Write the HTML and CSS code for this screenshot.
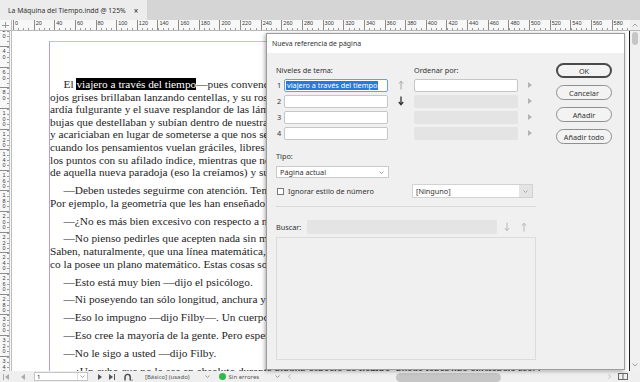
FILE: index.html
```html
<!DOCTYPE html>
<html lang="es">
<head>
  <meta charset="UTF-8">
  <title>La Máquina del Tiempo.indd @ 125%</title>
  <link rel="stylesheet" href="styles.css">
</head>
<body>
  <div id="app">
    <div class="tabbar">
      <div class="tab">La Máquina del Tiempo.indd @ 125% <span class="tab-close">×</span></div>
    </div>

    <div class="ruler-row">
      <div class="ruler-corner"></div>
      <div class="hruler">
        <span>0</span><span>20</span><span>40</span><span>60</span><span>80</span><span>100</span><span>120</span><span>140</span><span>160</span><span>180</span><span>200</span><span>220</span><span>240</span><span>260</span><span>280</span><span>300</span><span>320</span><span>340</span><span>360</span><span>380</span><span>400</span><span>420</span><span>440</span><span>460</span><span>480</span><span>500</span><span>520</span><span>540</span><span>560</span><span>580</span>
      </div>
      <div class="vscroll-cap">
        <svg width="6" height="4" viewBox="0 0 6 4"><path d="M0.5 3.5 L3 1 L5.5 3.5" fill="none" stroke="#999" stroke-width="0.9"/></svg>
      </div>
    </div>

    <div class="work">
      <div class="vruler">
        <div class="vruler-inner">
          <div class="vcell"><span>20</span></div><div class="vcell"><span>40</span></div><div class="vcell"><span>60</span></div><div class="vcell"><span>80</span></div><div class="vcell"><span>100</span></div><div class="vcell"><span>120</span></div><div class="vcell"><span>140</span></div><div class="vcell"><span>160</span></div><div class="vcell"><span>180</span></div><div class="vcell"><span>200</span></div><div class="vcell"><span>220</span></div><div class="vcell"><span>240</span></div><div class="vcell"><span>260</span></div><div class="vcell"><span>280</span></div><div class="vcell"><span>300</span></div><div class="vcell"><span>320</span></div><div class="vcell"><span>340</span></div>
        </div>
      </div>

      <div class="canvas">
        <div class="frame">
          <div class="story">
            <p>
              <span class="ln ind">El <mark>viajero a través del tiempo</mark>—pues convendrá llamarle así al hablar de él— nos exponía una misteriosa cuestión. Sus</span>
              <span class="ln">ojos grises brillaban lanzando centellas, y su rostro, habitualmente pálido, estaba encendido y animado. El fuego</span>
              <span class="ln">ardía fulgurante y el suave resplandor de las lámparas incandescentes, en forma de lirios de plata, se prendía en las bur-</span>
              <span class="ln">bujas que destellaban y subían dentro de nuestras copas. Nuestros sillones, construidos según sus diseños, nos abrazaban</span>
              <span class="ln">y acariciaban en lugar de someterse a que nos sentásemos en ellos; y había allí esa sibarítica atmósfera de sobremesa,</span>
              <span class="ln">cuando los pensamientos vuelan gráciles, libres de las trabas de la exactitud. Y él nos la expuso de este modo, señalando</span>
              <span class="ln">los puntos con su afilado índice, mientras que nosotros, arrellanados perezosamente, admirábamos su seriedad al tratar</span>
              <span class="ln">de aquella nueva paradoja (eso la creíamos) y su fecundidad.</span>
            </p>
            <p>
              <span class="ln ind">—Deben ustedes seguirme con atención. Tendré que discutir una o dos ideas que están casi universalmente admitidas.</span>
              <span class="ln">Por ejemplo, la geometría que les han enseñado en el colegio está basada sobre un concepto erróneo.</span>
            </p>
            <p><span class="ln ind">—¿No es más bien excesivo con respecto a nosotros ese comienzo? —dijo Filby, un personaje polemista de pelo rojo.</span></p>
            <p>
              <span class="ln ind">—No pienso pedirles que acepten nada sin motivo razonable para ello. Pronto admitirán lo que necesito de ustedes.</span>
              <span class="ln">Saben, naturalmente, que una línea matemática, una línea de espesor nulo, no tiene existencia real. ¿Les han enseñado esto? Tampo-</span>
              <span class="ln">co la posee un plano matemático. Estas cosas son simples abstracciones.</span>
            </p>
            <p><span class="ln ind">—Esto está muy bien —dijo el psicólogo.</span></p>
            <p><span class="ln ind">—Ni poseyendo tan sólo longitud, anchura y espesor, ¿puede un cubo tener existencia real?</span></p>
            <p><span class="ln ind">—Eso lo impugno —dijo Filby—. Un cuerpo sólido puede, por supuesto, existir. Todas las cosas reales...</span></p>
            <p><span class="ln ind">—Eso cree la mayoría de la gente. Pero espere un momento. ¿Puede un cubo instantáneo existir?</span></p>
            <p><span class="ln ind">—No le sigo a usted —dijo Filby.</span></p>
            <p><span class="ln ind">—¿Un cubo que no lo sea en absoluto durante ningún espacio de tiempo, puede tener una existencia real?</span></p>
          </div>
        </div>
      </div>

      <div class="vscroll">
        <div class="vthumb"></div>
        <svg class="vdown" width="6" height="4" viewBox="0 0 6 4"><path d="M0.5 0.5 L3 3 L5.5 0.5" fill="none" stroke="#999" stroke-width="0.9"/></svg>
      </div>
    </div>

    <div class="statusbar">
      <svg class="sb-first" width="6" height="6" viewBox="0 0 6 6"><path d="M0.5 0 V6" stroke="#aaa"/><path d="M6 0 L2 3 L6 6Z" fill="#aaa"/></svg>
      <svg class="sb-prev" width="4" height="6" viewBox="0 0 4 6"><path d="M4 0 L0 3 L4 6Z" fill="#aaa"/></svg>
      <div class="sb-page">
        <span class="sb-page-num">1</span>
        <span class="sb-page-drop"><svg width="5" height="3" viewBox="0 0 5 3"><path d="M0.5 0.5 L2.5 2.5 L4.5 0.5" fill="none" stroke="#888" stroke-width="0.8"/></svg></span>
      </div>
      <svg class="sb-next" width="4" height="6" viewBox="0 0 4 6"><path d="M0 0 L4 3 L0 6Z" fill="#555"/></svg>
      <svg class="sb-last" width="6" height="6" viewBox="0 0 6 6"><path d="M0 0 L4 3 L0 6Z" fill="#555"/><path d="M5.5 0 V6" stroke="#555"/></svg>
      <svg class="sb-arch" width="9" height="8" viewBox="0 0 9 8"><path d="M1 7.5 V4 A2.6 2.6 0 0 1 6.2 4 V7.5" fill="none" stroke="#444" stroke-width="1.4"/><circle cx="8" cy="7.2" r="0.6" fill="#444"/></svg>
      <span class="sb-style">[Básico] (usado)</span>
      <svg class="sb-drop1" width="5" height="3" viewBox="0 0 5 3"><path d="M0.5 0.5 L2.5 2.5 L4.5 0.5" fill="none" stroke="#888" stroke-width="0.8"/></svg>
      <span class="sb-dot"></span>
      <span class="sb-errors">Sin errores</span>
      <svg class="sb-drop2" width="5" height="3" viewBox="0 0 5 3"><path d="M0.5 0.5 L2.5 2.5 L4.5 0.5" fill="none" stroke="#888" stroke-width="0.8"/></svg>
      <svg class="sb-left" width="3" height="5" viewBox="0 0 3 5"><path d="M2.5 0.5 L0.5 2.5 L2.5 4.5" fill="none" stroke="#aaa" stroke-width="0.8"/></svg>
      <div class="hthumb"></div>
      <svg class="sb-right" width="3" height="5" viewBox="0 0 3 5"><path d="M0.5 0.5 L2.5 2.5 L0.5 4.5" fill="none" stroke="#aaa" stroke-width="0.8"/></svg>
      <svg class="sb-split" width="10" height="7" viewBox="0 0 10 7"><rect x="0.5" y="0.5" width="9" height="6" fill="none" stroke="#666"/><path d="M5 0.5 V6.5" stroke="#666"/></svg>
    </div>

    <!-- dialog floats over the document -->
    <div class="dialog">
      <div class="dlg-title">Nueva referencia de página</div>
      <div class="dlg-body">
        <div class="dlg-main">
          <div class="levels">
            <div class="lbl lbl-levels">Niveles de tema:</div>
            <div class="lbl lbl-sort">Ordenar por:</div>

            <span class="num">1</span>
            <div class="field focus"><span class="sel">viajero a través del tiempo</span></div>
            <svg class="arrow" width="6" height="10" viewBox="0 0 6 10"><path d="M3 1.2 V9.5 M1 3.6 L3 1.2 L5 3.6" fill="none" stroke="#a8a8a8" stroke-width="1"/></svg>
            <div class="field"></div>
            <svg class="tri" width="4" height="6" viewBox="0 0 4 6"><path d="M0 0 L4 3 L0 6Z" fill="#b4b4b4"/></svg>

            <span class="num">2</span>
            <div class="field"></div>
            <svg class="arrow" width="6" height="10" viewBox="0 0 6 10"><path d="M3 0.5 V8.5 M0.8 6 L3 8.8 L5.2 6" fill="none" stroke="#333" stroke-width="1.3"/></svg>
            <div class="field off"></div>
            <svg class="tri" width="4" height="6" viewBox="0 0 4 6"><path d="M0 0 L4 3 L0 6Z" fill="#b4b4b4"/></svg>

            <span class="num">3</span>
            <div class="field"></div>
            <span></span>
            <div class="field off"></div>
            <svg class="tri" width="4" height="6" viewBox="0 0 4 6"><path d="M0 0 L4 3 L0 6Z" fill="#b4b4b4"/></svg>

            <span class="num">4</span>
            <div class="field"></div>
            <span></span>
            <div class="field off"></div>
            <svg class="tri" width="4" height="6" viewBox="0 0 4 6"><path d="M0 0 L4 3 L0 6Z" fill="#b4b4b4"/></svg>
          </div>

          <div class="lbl lbl-tipo">Tipo:</div>
          <div class="select">
            <span>Página actual</span>
            <svg width="5" height="3" viewBox="0 0 5 3"><path d="M0.5 0.5 L2.5 2.5 L4.5 0.5" fill="none" stroke="#888" stroke-width="0.8"/></svg>
          </div>

          <div class="check-row">
            <span class="checkbox"></span>
            <span class="lbl">Ignorar estilo de número</span>
            <div class="combo">
              <span class="combo-text">[Ninguno]</span>
              <span class="combo-btn"><svg width="5" height="3" viewBox="0 0 5 3"><path d="M0.5 0.5 L2.5 2.5 L4.5 0.5" fill="none" stroke="#999" stroke-width="0.8"/></svg></span>
            </div>
          </div>

          <div class="sep"></div>

          <div class="search-row">
            <span class="lbl lbl-find">Buscar:</span>
            <div class="field off find"></div>
            <svg class="find-down" width="6" height="10" viewBox="0 0 6 10"><path d="M3 0.5 V8.5 M1 6.2 L3 8.8 L5 6.2" fill="none" stroke="#b8b8b8" stroke-width="1"/></svg>
            <svg class="find-up" width="6" height="10" viewBox="0 0 6 10"><path d="M3 1.2 V9.5 M1 3.6 L3 1.2 L5 3.6" fill="none" stroke="#b8b8b8" stroke-width="1"/></svg>
          </div>

          <div class="listbox"></div>
        </div>

        <div class="dlg-buttons">
          <button class="btn btn-default">OK</button>
          <button class="btn">Cancelar</button>
          <button class="btn">Añadir</button>
          <button class="btn">Añadir todo</button>
        </div>
      </div>
    </div>
  </div>
</body>
</html>
```

FILE: styles.css
```css
* {
  margin: 0; padding: 0; box-sizing: border-box;
}
html, body {
  width: 640px; height: 382px; overflow: hidden;
}
body {
  background: #f0f0f0; color: #333;
  font-family: "Noto Sans", "Open Sans", sans-serif;
}
#app {
  position: relative; display: flex; flex-direction: column; height: 382px;
}

/* document tab */
.tabbar { height: 20px; background: #d5d5d5; display: flex; }
.tab {
  width: 147px; background: #ececec; display: flex; align-items: center;
  padding-left: 8px; gap: 8px; font-size: 6.8px; color: #333; white-space: nowrap;
}
.tab-close { font-size: 8px; font-weight: bold; color: #555; }

/* rulers */
.ruler-row {
  height: 11px; display: flex; background: #f7f7f7; border-bottom: 1px solid #b8b8b8;
}
.ruler-corner {
  width: 12px; border-right: 1px solid #bdbdbd;
  background:
    linear-gradient(#9a9a9a, #9a9a9a) 5px 2px / 1px 6px no-repeat,
    linear-gradient(#9a9a9a, #9a9a9a) 2px 5px / 7px 1px no-repeat;
}
.hruler {
  flex: 1; display: flex; overflow: hidden; padding-left: 1px;
  background: repeating-linear-gradient(90deg, #9a9a9a 0 1px, transparent 1px 5.1625px) 1px 100% / 100% 2px no-repeat;
}
.hruler span {
  flex: 0 0 20.65px; border-left: 1px solid #8c8c8c; padding-left: 1px;
  font-family: "Liberation Sans", Arial, sans-serif; font-size: 5.5px; line-height: 7px; color: #3a3a3a;
}
.vscroll-cap {
  width: 10px; display: flex; justify-content: center; align-items: center; background: #f0f0f0;
}

.work { flex: 1; display: flex; min-height: 0; }
.vruler {
  width: 12px; background: #f7f7f7; overflow: hidden;
  border-right: 3px double #bdbdbd;
}
.vruler-inner { margin-top: -5.65px; }
.vcell {
  height: 20.65px; border-top: 1px solid #8c8c8c; display: flex; justify-content: space-between;
  background: repeating-linear-gradient(180deg, #9a9a9a 0 1px, transparent 1px 5.1625px) 100% 0 / 2px 100% no-repeat;
}
.vcell span {
  writing-mode: vertical-lr; text-orientation: upright; padding: 1px 0 0 1px;
  font-family: "Liberation Sans", Arial, sans-serif; font-size: 5.5px; line-height: 6px; color: #3a3a3a;
  letter-spacing: -0.5px;
}

/* page */
.canvas {
  flex: 1; background: #fff; display: flex; overflow: hidden;
  padding: 10px 0 0 37px; border-right: 1px solid #1c1c1c;
}
.frame {
  flex: 1; margin-right: 37px; overflow: hidden; padding-top: 36px;
  border-top: 1px solid #f2a4f2; border-left: 1px solid #ad9ff2;
}
.story {
  font-family: "Liberation Serif", "Times New Roman", serif;
  font-size: 11.3px; line-height: 12.6px; color: #1e1e1e;
}
.story p + p { margin-top: 5.3px; }
.ln { display: block; white-space: nowrap; }
.ln.ind { text-indent: 13.5px; }
mark { background: #000; color: #fff; }

.vscroll {
  width: 10px; background: #f0f0f0; display: flex; flex-direction: column;
  align-items: center; justify-content: space-between; padding: 1px 0 4px;
}
.vthumb { width: 6px; height: 13px; border-radius: 3px; background: #c6c6c6; }

/* status bar */
.statusbar {
  height: 11px; background: #efefef; display: flex; align-items: center;
  font-size: 6px; color: #555; white-space: nowrap;
}
.sb-first { margin-left: 3px; }
.sb-prev { margin-left: 12px; }
.sb-page {
  margin-left: 9px; width: 54px; height: 9px; background: #fff; border: 1px solid #c4c4c4;
  display: flex; align-items: center;
}
.sb-page-num { flex: 1; padding-left: 2px; color: #222; }
.sb-page-drop {
  width: 10px; height: 100%; border-left: 1px solid #ddd; display: flex; align-items: center; justify-content: center;
}
.sb-next { margin-left: 10px; }
.sb-last { margin-left: 7px; }
.sb-arch { margin-left: 9px; }
.sb-style { margin-left: 12px; }
.sb-drop1 { margin-left: 15px; }
.sb-dot { margin-left: 9px; width: 7px; height: 7px; border-radius: 50%; background: #2fb94a; }
.sb-errors { margin-left: 3px; }
.sb-drop2 { margin-left: 16px; }
.sb-left { margin-left: 8px; }
.hthumb { margin: 2px 0 0 105px; width: 105px; height: 9px; border-radius: 5px; background: #c6c6c6; align-self: flex-start; }
.sb-right { margin-left: 107px; }
.sb-split { margin-left: 7px; }

/* dialog */
.dialog {
  position: absolute; left: 266px; top: 33px; width: 359px; height: 337px;
  background: #f0f0f0; border: 1px solid #9c9c9c;
  box-shadow: -1px 1px 4px rgba(0, 0, 0, 0.35);
  font-size: 7.3px; color: #333;
}
.dlg-title {
  height: 19px; background: #fff; display: flex; align-items: center;
  padding-left: 5px; font-size: 6.9px; color: #333;
}
.dlg-body { display: flex; gap: 20px; padding: 10px 12px 0 9px; }
.dlg-main { width: 260px; display: flex; flex-direction: column; }
.lbl { white-space: nowrap; line-height: 10px; }

.levels {
  display: grid; grid-template-columns: 8px 104px 26px 104px 18px;
  grid-template-rows: repeat(5, 12.5px); row-gap: 3.5px; align-items: center;
}
.lbl-levels { grid-column: 1 / 3; padding-top: 2px; }
.lbl-sort { grid-column: 4 / 6; padding-top: 2px; }
.num { padding-left: 1px; }
.field {
  height: 12.5px; background: #fff; border: 1px solid #c6c6c6; border-radius: 2px;
  display: flex; align-items: center; padding-left: 1px;
}
.field.focus { border-color: #6d9fdc; }
.field.off { background: #e4e4e4; border-color: #e4e4e4; }
.sel { background: #2d77d6; color: #fff; line-height: 9px; padding: 0 1px; white-space: nowrap; }
.arrow { justify-self: center; }
.tri { margin-left: 10px; }

.lbl-tipo { margin-top: 11.5px; }
.select {
  margin-top: 5px; width: 113px; height: 12px; background: #fff; border: 1px solid #cacaca;
  display: flex; align-items: center; justify-content: space-between; padding: 0 4px 0 3px;
}
.check-row { margin-top: 6px; height: 14px; display: flex; align-items: center; }
.checkbox { width: 7px; height: 7px; margin: 0 4px 0 1px; border: 1px solid #7a7a7a; background: #fff; }
.combo {
  margin: 0 3px 0 auto; width: 121px; height: 14px; display: flex;
  background: #fff; border: 1px solid #d2d2d2;
}
.combo-text { flex: 1; padding-left: 3px; line-height: 12px; }
.combo-btn { width: 13px; background: #e4e4e4; display: flex; align-items: center; justify-content: center; }
.sep { margin-top: 8px; border-top: 1px solid #d9d9d9; }
.search-row { margin-top: 12.5px; height: 14px; display: flex; align-items: center; }
.lbl-find { width: 31px; }
.find { width: 190px; height: 14px; }
.find-down { margin-left: 7px; }
.find-up { margin-left: 11px; }
.listbox { margin-top: 3px; height: 123px; border: 1px solid #dcdcdc; }

.dlg-buttons { width: 56px; display: flex; flex-direction: column; gap: 7px; }
.btn {
  height: 15px; border: 1px solid #8f8f8f; border-radius: 8px; background: #f3f3f3;
  font-family: "Noto Sans", "Open Sans", sans-serif; font-size: 7.3px; color: #333;
}
.btn-default { border: 2px solid #4a4a4a; }
```
